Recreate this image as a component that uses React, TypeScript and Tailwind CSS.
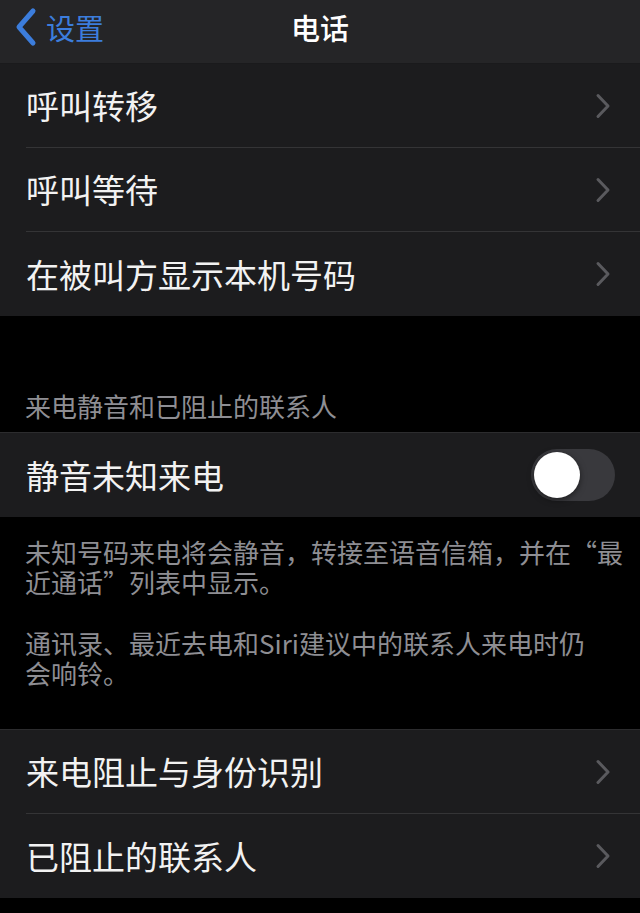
const font = { fontFamily: '"Noto Sans CJK SC", "Noto Sans", sans-serif' };

function Chevron() {
  return (
    <svg width="16" height="26" viewBox="0 0 16 26" fill="none" className="shrink-0">
      <path d="M3 2.5 L13 13 L3 23.5" stroke="#5a5a5e" strokeWidth="3" strokeLinecap="round" strokeLinejoin="round" />
    </svg>
  );
}

function Row({ label, last, right }: { label: string; last?: boolean; right?: React.ReactNode }) {
  return (
    <div className="flex h-[84px] pl-[26px]">
      <div className={`flex flex-1 items-center pr-[29px] ${last ? '' : 'border-b border-[#343436]'}`}>
        <span className="flex-1 text-[33px] leading-none text-[#f2f2f2]">{label}</span>
        {right ?? <Chevron />}
      </div>
    </div>
  );
}

function Toggle() {
  return (
    <div className="mr-[-4px] flex h-[52px] w-[84px] items-center rounded-full bg-[#39393d] p-[3px]">
      <div className="h-[46px] w-[46px] rounded-full bg-white shadow-[0_2px_6px_rgba(0,0,0,0.5)]" />
    </div>
  );
}

const footerLines = [
  ['未知号码来电将会静音，转接至语音信箱，并在“最', '近通话”列表中显示。'],
  ['通讯录、最近去电和Siri建议中的联系人来电时仍', '会响铃。'],
];

export default function App() {
  return (
    <div className="flex h-[913px] w-[640px] flex-col overflow-hidden bg-black" style={font}>
      {/* nav bar */}
      <div className="grid h-16 grid-cols-[1fr_auto_1fr] items-center border-b border-[#1a1a1c] bg-[#252527] pb-[9px]">
        <div className="flex items-center gap-[8px] pl-[14px] text-[#3c7ddc]">
          <svg width="24" height="40" viewBox="0 0 24 40" fill="none">
            <path d="M19 4 L5 20 L19 36" stroke="#3c7ddc" strokeWidth="5" strokeLinecap="round" strokeLinejoin="round" />
          </svg>
          <span className="text-[29px] leading-none">设置</span>
        </div>
        <span className="text-[29px] font-medium leading-none text-white">电话</span>
        <div />
      </div>

      <div className="bg-[#1c1c1e]">
        <Row label="呼叫转移" />
        <Row label="呼叫等待" />
        <Row label="在被叫方显示本机号码" last />
      </div>

      <div className="px-[25px] pb-[10px] pt-[74px] text-[26px] leading-[32px] text-[#8e8e93]">
        来电静音和已阻止的联系人
      </div>

      <div className="border-t border-[#2c2c2e] bg-[#1c1c1e]">
        <Row label="静音未知来电" last right={<Toggle />} />
      </div>

      <div className="flex flex-col gap-[31px] whitespace-nowrap px-[25px] pb-[41px] pt-[20px] text-[26px] text-[#8e8e93]">
        {footerLines.map((para, i) => (
          <div key={i}>
            {para.map((line) => (
              <div key={line} className="h-[30px] leading-[30px]">
                {line}
              </div>
            ))}
          </div>
        ))}
      </div>

      <div className="border-t border-[#2c2c2e] bg-[#1c1c1e]">
        <Row label="来电阻止与身份识别" />
        <Row label="已阻止的联系人" last />
      </div>
    </div>
  );
}
